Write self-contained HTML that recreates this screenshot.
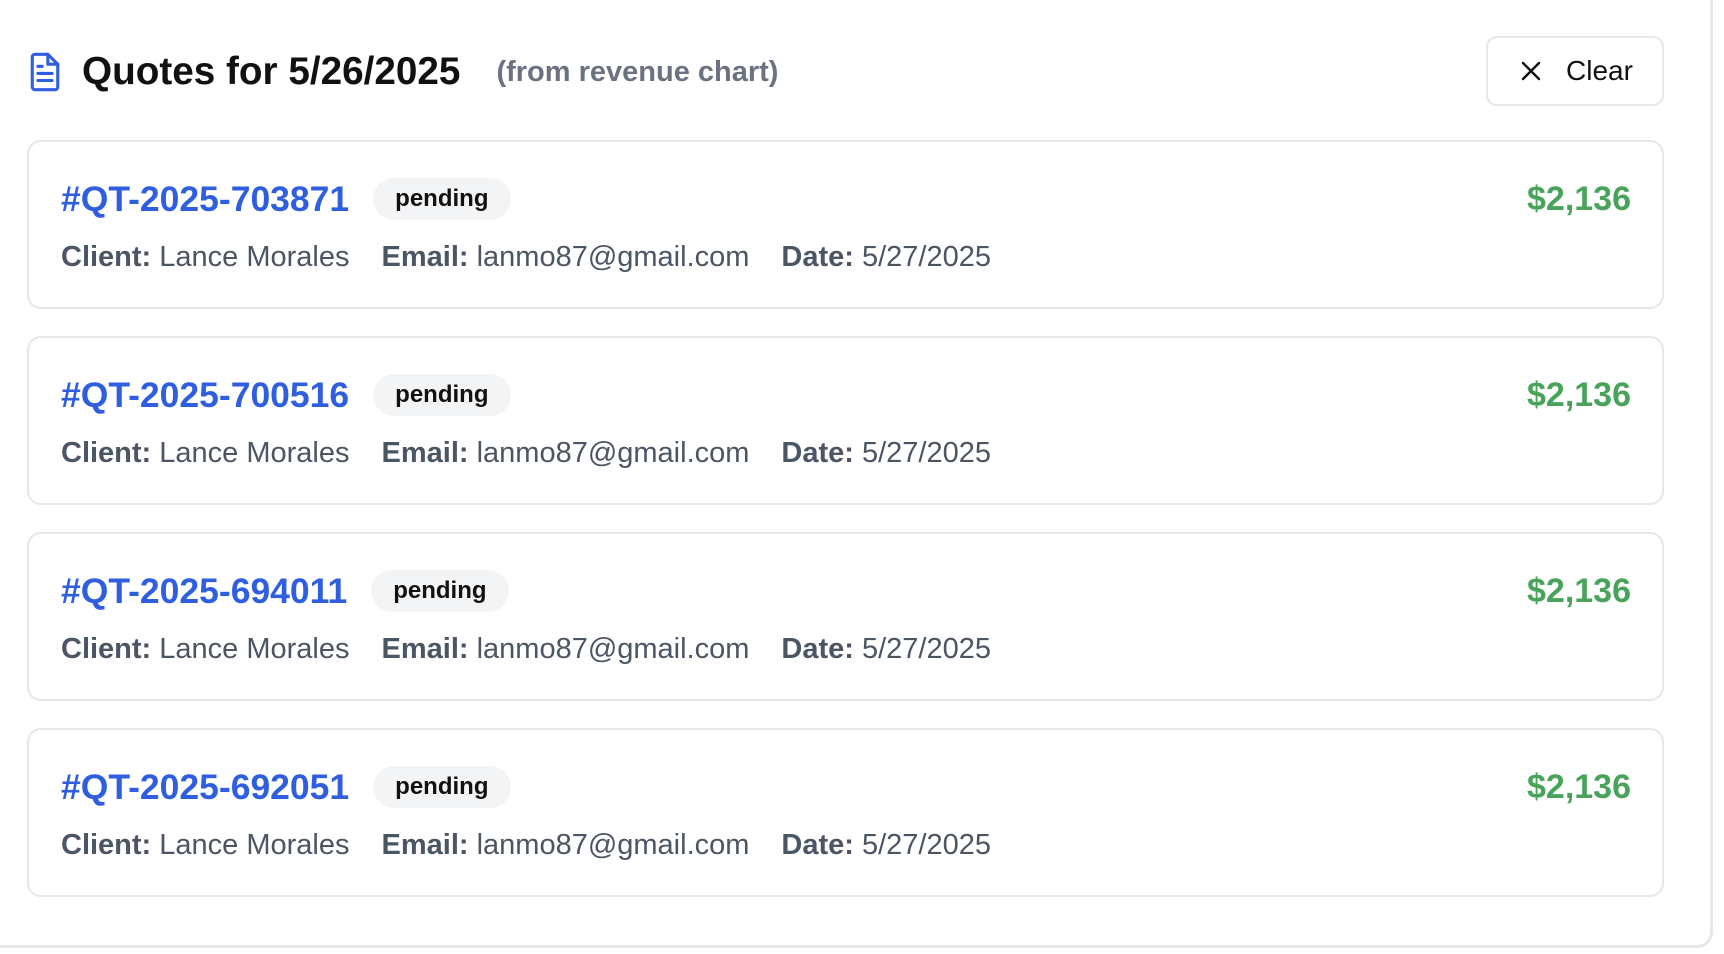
<!DOCTYPE html>
<html><head><meta charset="utf-8"><style>
*{box-sizing:border-box;margin:0;padding:0}
body{width:1724px;height:954px;background:#fff;font-family:"Liberation Sans",sans-serif;position:relative;overflow:hidden}
.outer{position:absolute;left:-20px;top:-20px;width:1733px;height:968px;border:3px solid #e5e7eb;border-radius:16px}
.hdr{position:absolute;left:28px;top:50px;height:44px;display:flex;align-items:center}
.title{font-size:38.7px;font-weight:700;color:#111;margin-left:20px}
.sub{font-size:29px;font-weight:700;color:#6b7280;margin-left:36px}
.btn{position:absolute;left:1486px;top:36px;width:178px;height:70px;border:2px solid #e5e7eb;border-radius:11px;display:flex;align-items:center}
.btn span{font-size:28px;color:#111;margin-left:24px}
.card{position:absolute;left:27px;width:1637px;height:169px;border:2px solid #e5e7eb;border-radius:14px}
.row1{position:absolute;left:32px;top:35px;height:44px;display:flex;align-items:center}
.id{font-size:35.5px;font-weight:700;color:#2f5fe0}
.badge{margin-left:24px;height:42px;padding:0 22px;border-radius:21px;background:#f3f4f6;font-size:24px;font-weight:700;color:#111;display:flex;align-items:center}
.amt{position:absolute;right:31px;top:35px;height:44px;line-height:44px;font-size:34px;font-weight:700;color:#4aa35a}
.row2{position:absolute;left:32px;top:99px;font-size:29px;color:#4b5563;white-space:nowrap}
.row2 b{color:#4b5563}
.row2 .s{display:inline-block;width:32px}
</style></head><body>
<div class="outer"></div>
<div class="hdr">
<svg width="34" height="40" viewBox="0 0 24 28" fill="none" stroke="#2f5fe0" stroke-width="2.2" stroke-linejoin="round" stroke-linecap="round"><path d="M3 3.5a2 2 0 0 1 2-2h9l7 7v16a2 2 0 0 1-2 2H5a2 2 0 0 1-2-2z"/><path d="M14 1.5v7h7"/><path d="M7 15h10M7 20h10M7 10h3"/></svg>
<span class="title">Quotes for 5/26/2025</span><span class="sub">(from revenue chart)</span></div>
<div class="btn"><svg style="margin-left:32px" width="22" height="22" viewBox="0 0 22 22" stroke="#111" stroke-width="2.4" stroke-linecap="round"><path d="M3 3l16 16M19 3L3 19"/></svg><span>Clear</span></div>

<div class="card" style="top:140px"><div class="row1"><span class="id">#QT-2025-703871</span><span class="badge">pending</span></div><div class="amt">$2,136</div><div class="row2"><b>Client:</b> Lance Morales<span class="s"></span><b>Email:</b> lanmo87@gmail.com<span class="s"></span><b>Date:</b> 5/27/2025</div></div>
<div class="card" style="top:336px"><div class="row1"><span class="id">#QT-2025-700516</span><span class="badge">pending</span></div><div class="amt">$2,136</div><div class="row2"><b>Client:</b> Lance Morales<span class="s"></span><b>Email:</b> lanmo87@gmail.com<span class="s"></span><b>Date:</b> 5/27/2025</div></div>
<div class="card" style="top:532px"><div class="row1"><span class="id">#QT-2025-694011</span><span class="badge">pending</span></div><div class="amt">$2,136</div><div class="row2"><b>Client:</b> Lance Morales<span class="s"></span><b>Email:</b> lanmo87@gmail.com<span class="s"></span><b>Date:</b> 5/27/2025</div></div>
<div class="card" style="top:728px"><div class="row1"><span class="id">#QT-2025-692051</span><span class="badge">pending</span></div><div class="amt">$2,136</div><div class="row2"><b>Client:</b> Lance Morales<span class="s"></span><b>Email:</b> lanmo87@gmail.com<span class="s"></span><b>Date:</b> 5/27/2025</div></div>
</body></html>
